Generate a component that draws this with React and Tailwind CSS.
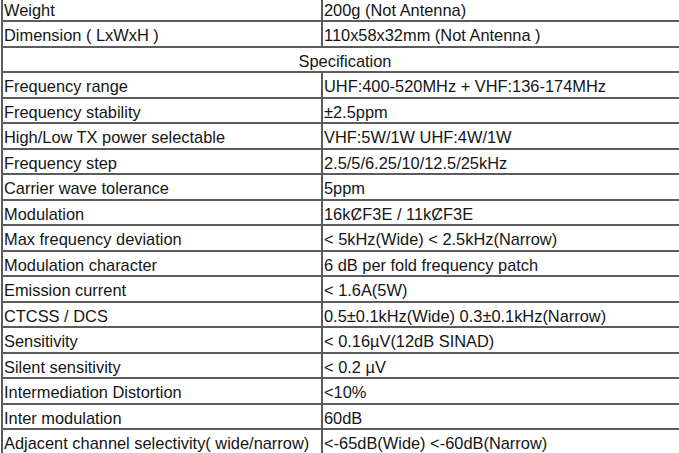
import React from "react";

const topRows = [
  ["Weight", "200g (Not Antenna)"],
  ["Dimension ( LxWxH )", "110x58x32mm (Not Antenna )"],
];

const specRows = [
  ["Frequency range", "UHF:400-520MHz + VHF:136-174MHz"],
  ["Frequency stability", "±2.5ppm"],
  ["High/Low TX power selectable", "VHF:5W/1W UHF:4W/1W"],
  ["Frequency step", "2.5/5/6.25/10/12.5/25kHz"],
  ["Carrier wave tolerance", "5ppm"],
  ["Modulation", "16kȻF3E / 11kȻF3E"],
  ["Max frequency deviation", "< 5kHz(Wide) < 2.5kHz(Narrow)"],
  ["Modulation character", "6 dB per fold frequency patch"],
  ["Emission current", "< 1.6A(5W)"],
  ["CTCSS / DCS", "0.5±0.1kHz(Wide) 0.3±0.1kHz(Narrow)"],
  ["Sensitivity", "< 0.16µV(12dB SINAD)"],
  ["Silent sensitivity", "< 0.2 µV"],
  ["Intermediation Distortion", "<10%"],
  ["Inter modulation", "60dB"],
  ["Adjacent channel selectivity( wide/narrow)", "<-65dB(Wide) <-60dB(Narrow)"],
];

const Row = ({ label, value }) => (
  <div className="flex h-[25.5px] border-b-2 border-[#5c5c5c]">
    <div className="w-[320px] shrink-0 border-r-2 border-[#5c5c5c] pl-[1px] pt-[1px] leading-[24px] whitespace-nowrap">
      {label}
    </div>
    <div className="flex-1 pl-[1px] pt-[1px] leading-[24px] whitespace-nowrap">{value}</div>
  </div>
);

export default function App() {
  return (
    <div className="w-[679px] h-[453px] overflow-hidden bg-white">
      <div
        className="ml-[1px] -mt-[3.5px] w-[686px] border-l-2 border-[#5c5c5c] text-[16.4px] text-[#151515]"
        style={{ fontFamily: '"Liberation Sans", Arial, sans-serif' }}
      >
        {topRows.map(([label, value]) => (
          <Row key={label} label={label} value={value} />
        ))}
        <div className="h-[25.5px] border-b-2 border-[#5c5c5c] pt-[1px] text-center leading-[24px]">
          Specification
        </div>
        {specRows.map(([label, value]) => (
          <Row key={label} label={label} value={value} />
        ))}
      </div>
    </div>
  );
}
